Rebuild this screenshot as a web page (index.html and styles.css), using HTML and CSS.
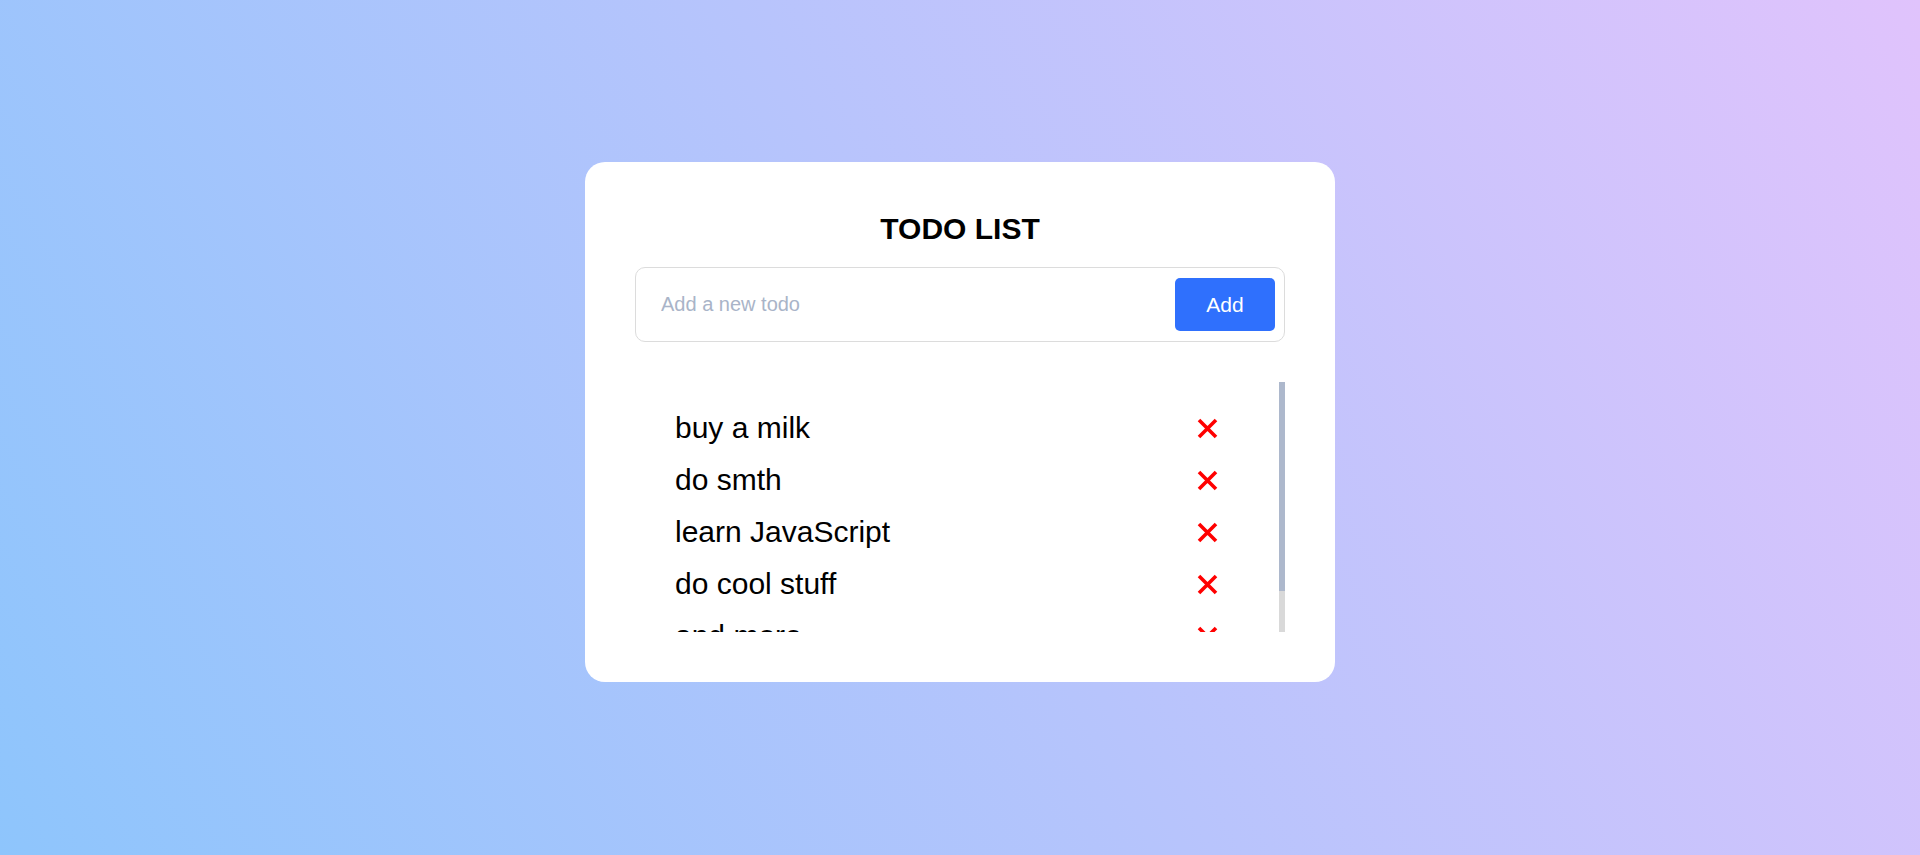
FILE: index.html
```html
<!DOCTYPE html>
<html lang="en">
<head>
<meta charset="utf-8">
<title>Todo List</title>
<link rel="stylesheet" href="styles.css">
</head>
<body>
  <main class="page">
    <section class="card">
      <h1 class="title">TODO LIST</h1>
      <form class="add-form">
        <input class="add-input" type="text" placeholder="Add a new todo">
        <button class="add-btn" type="button">Add</button>
      </form>
      <div class="list-wrap">
        <div class="list-scroll">
          <ul class="todo-list">
            <li class="todo-item"><span class="todo-text">buy a milk</span><span class="todo-del"><svg viewBox="0 0 21 21" width="21" height="21"><path d="M2 2 L19 19 M19 2 L2 19" stroke="#ff0000" stroke-width="3.6" fill="none"/></svg></span></li>
            <li class="todo-item"><span class="todo-text">do smth</span><span class="todo-del"><svg viewBox="0 0 21 21" width="21" height="21"><path d="M2 2 L19 19 M19 2 L2 19" stroke="#ff0000" stroke-width="3.6" fill="none"/></svg></span></li>
            <li class="todo-item"><span class="todo-text">learn JavaScript</span><span class="todo-del"><svg viewBox="0 0 21 21" width="21" height="21"><path d="M2 2 L19 19 M19 2 L2 19" stroke="#ff0000" stroke-width="3.6" fill="none"/></svg></span></li>
            <li class="todo-item"><span class="todo-text">do cool stuff</span><span class="todo-del"><svg viewBox="0 0 21 21" width="21" height="21"><path d="M2 2 L19 19 M19 2 L2 19" stroke="#ff0000" stroke-width="3.6" fill="none"/></svg></span></li>
            <li class="todo-item"><span class="todo-text">and more</span><span class="todo-del"><svg viewBox="0 0 21 21" width="21" height="21"><path d="M2 2 L19 19 M19 2 L2 19" stroke="#ff0000" stroke-width="3.6" fill="none"/></svg></span></li>
          </ul>
        </div>
        <div class="scrollbar"><div class="scrollbar-thumb"></div></div>
      </div>
    </section>
  </main>
</body>
</html>
```

FILE: styles.css
```css
* {
  box-sizing: border-box;
}

html, body {
  margin: 0;
  padding: 0;
  height: 100%;
}

body {
  font-family: "Liberation Sans", Arial, sans-serif;
  background-image: linear-gradient(62deg, #8ec5fc 0%, #e0c3fc 100%);
  background-attachment: fixed;
}

.page {
  min-height: 100vh;
  display: flex;
  align-items: center;
  justify-content: center;
  padding-bottom: 11px;
}

.card {
  width: 750px;
  background: #ffffff;
  border-radius: 20px;
  padding: 50px 50px 50px;
}

.title {
  margin: 0 0 21px;
  text-align: center;
  font-size: 30px;
  font-weight: 700;
  color: #000;
  line-height: 1.15;
}

.add-form {
  display: flex;
  align-items: center;
  border: 1px solid #dcdcdc;
  border-radius: 10px;
  padding: 10px 9px;
}

.add-input {
  flex: 1;
  border: none;
  outline: none;
  background: transparent;
  font-family: inherit;
  font-size: 20px;
  padding: 0 16px;
  color: #000;
}

.add-input::placeholder {
  color: #a9b4c8;
}

.add-btn {
  width: 100px;
  height: 53px;
  border: none;
  border-radius: 5px;
  background: #2f70fd;
  color: #ffffff;
  font-family: inherit;
  font-size: 21px;
  cursor: pointer;
}

.list-wrap {
  margin-top: 40px;
  height: 250px;
  display: flex;
}

.list-scroll {
  flex: 1;
  height: 100%;
  overflow: hidden;
}

.scrollbar {
  width: 6px;
  height: 100%;
  background: #d9d9d9;
}

.scrollbar-thumb {
  height: 209px;
  background: #adb8cc;
}

.todo-list {
  list-style: none;
  margin: 0;
  padding: 20px 0;
}

.todo-item {
  height: 52px;
  display: flex;
  align-items: center;
  justify-content: space-between;
  padding: 0 61px 0 40px;
  font-size: 30px;
  color: #000;
}

.todo-del {
  display: flex;
  width: 21px;
  height: 21px;
  cursor: pointer;
}
```
